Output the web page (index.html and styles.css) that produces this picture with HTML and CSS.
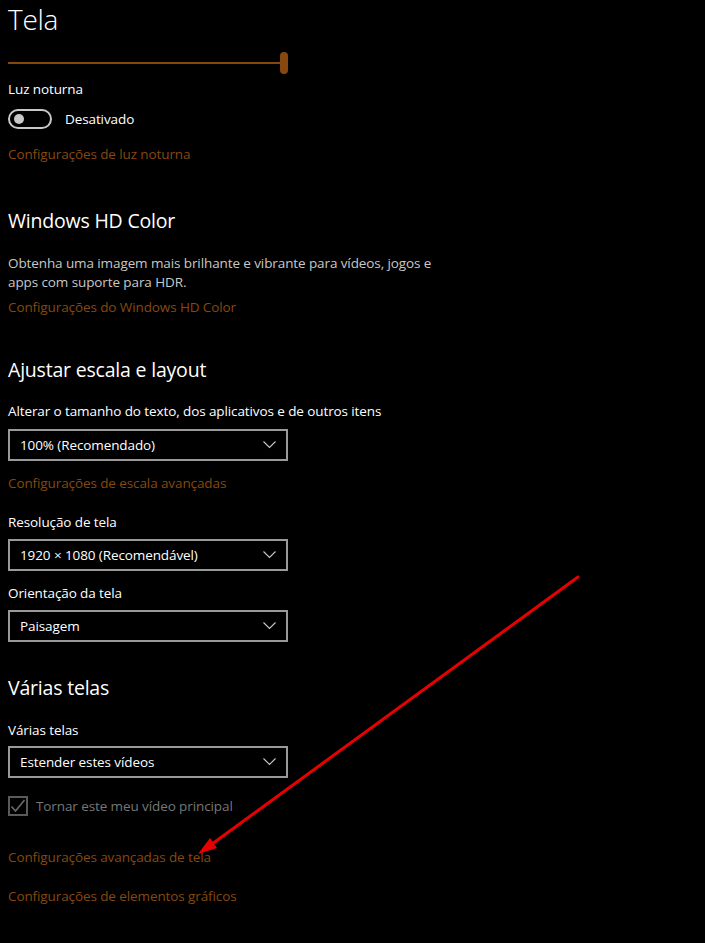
FILE: index.html
```html
<!DOCTYPE html>
<html lang="pt-BR">
<head>
  <meta charset="UTF-8">
  <meta name="viewport" content="width=device-width, initial-scale=1">
  <title>Tela</title>
  <link rel="stylesheet" href="styles.css">
</head>
<body>
  <div class="page">
    <h1 class="title">Tela</h1>

    <div class="slider"><div class="track"></div><div class="thumb"></div></div>

    <div class="label lbl-night">Luz noturna</div>
    <div class="toggle-row">
      <span class="toggle"><span class="knob"></span></span>
      <span class="toggle-text">Desativado</span>
    </div>
    <a class="link link-night" href="#">Configurações de luz noturna</a>

    <h2 class="heading h-hd">Windows HD Color</h2>
    <p class="desc">Obtenha uma imagem mais brilhante e vibrante para vídeos, jogos e apps com suporte para HDR.</p>
    <a class="link link-hd" href="#">Configurações do Windows HD Color</a>

    <h2 class="heading h-scale">Ajustar escala e layout</h2>
    <div class="label lbl-size">Alterar o tamanho do texto, dos aplicativos e de outros itens</div>
    <div class="select sel-a">
      <span>100% (Recomendado)</span>
      <svg class="chev" width="13" height="8" viewBox="0 0 13 8"><polyline points="0.5,0.5 6.5,6.5 12.5,0.5" fill="none" stroke="#c8c8c8" stroke-width="1.1"/></svg>
    </div>
    <a class="link link-scale" href="#">Configurações de escala avançadas</a>

    <div class="label lbl-res">Resolução de tela</div>
    <div class="select sel-b">
      <span>1920 × 1080 (Recomendável)</span>
      <svg class="chev" width="13" height="8" viewBox="0 0 13 8"><polyline points="0.5,0.5 6.5,6.5 12.5,0.5" fill="none" stroke="#c8c8c8" stroke-width="1.1"/></svg>
    </div>
    <div class="label lbl-orient">Orientação da tela</div>
    <div class="select sel-b">
      <span>Paisagem</span>
      <svg class="chev" width="13" height="8" viewBox="0 0 13 8"><polyline points="0.5,0.5 6.5,6.5 12.5,0.5" fill="none" stroke="#c8c8c8" stroke-width="1.1"/></svg>
    </div>

    <h2 class="heading h-multi">Várias telas</h2>
    <div class="label lbl-multi">Várias telas</div>
    <div class="select sel-c">
      <span>Estender estes vídeos</span>
      <svg class="chev" width="13" height="8" viewBox="0 0 13 8"><polyline points="0.5,0.5 6.5,6.5 12.5,0.5" fill="none" stroke="#c8c8c8" stroke-width="1.1"/></svg>
    </div>
    <div class="check-row">
      <span class="check">
        <svg width="16" height="16" viewBox="0 0 16 16"><polyline points="1.5,8.5 5.5,13 14.5,2" fill="none" stroke="#6a6a6a" stroke-width="1.6"/></svg>
      </span>
      <span class="check-text">Tornar este meu vídeo principal</span>
    </div>
    <a class="link link-adv" href="#">Configurações avançadas de tela</a>
    <a class="link link-gfx" href="#">Configurações de elementos gráficos</a>
  </div>

  <svg class="arrow" width="705" height="943" viewBox="0 0 705 943">
    <line x1="578" y1="577" x2="212" y2="844" stroke="#e60000" stroke-width="3" stroke-linecap="round"/>
    <polygon points="198,854 217,848 210,838" fill="#e60000"/>
  </svg>
</body>
</html>
```

FILE: styles.css
```css
body { margin: 0; background: #000; color: #fff; font-family: "Open Sans", "Noto Sans", sans-serif; font-size: 13.5px; letter-spacing: -0.1px; }
.page { padding: 0 8px; display: flex; flex-direction: column; align-items: flex-start; width: 440px; }

.title { margin: 0; font-size: 28px; font-weight: 300; line-height: 38px; height: 38px; letter-spacing: -0.3px; }
.heading { margin: 0; font-size: 19.5px; font-weight: 400; line-height: 28px; letter-spacing: -0.2px; }
.label { line-height: 20px; }
.link { display: block; color: #87480f; text-decoration: none; line-height: 20px; }
.desc { margin: 0; color: #c8c8c8; line-height: 19px; width: 430px; }

.slider { position: relative; width: 280px; height: 22px; margin-top: 14px; }
.track { position: absolute; left: 0; right: 4px; top: 10px; height: 2px; background: #87480f; }
.thumb { position: absolute; right: 0; top: 0; width: 8px; height: 22px; border-radius: 4px; background: #87480f; }

.lbl-night { margin-top: 5px; }
.toggle-row { display: flex; align-items: center; gap: 13px; margin-top: 9px; height: 21px; }
.toggle { height: 16px; width: 36px; border: 2px solid #c8c8c8; border-radius: 10px; display: flex; align-items: center; padding-left: 4px; box-sizing: content-box; }
.knob { width: 10px; height: 10px; border-radius: 50%; background: #c8c8c8; }
.toggle-text { margin-top: 1px; }
.link-night { margin-top: 15px; }

.h-hd { margin-top: 43px; }
.desc { margin-top: 19px; }
.link-hd { margin-top: 5px; }

.h-scale { margin-top: 39px; }
.lbl-size { margin-top: 17px; }
.select { box-sizing: border-box; width: 280px; height: 32px; border: 2px solid #999; display: flex; align-items: center; justify-content: space-between; padding: 0 10px 0 10px; }
.chev { display: block; }
.sel-a { margin-top: 8px; }
.link-scale { margin-top: 12px; }
.lbl-res { margin-top: 19px; }
.sel-b { margin-top: 7px; }
.lbl-orient { margin-top: 12px; }

.h-multi { margin-top: 32px; }
.lbl-multi { margin-top: 18px; }
.sel-c { margin-top: 6px; }
.check-row { display: flex; align-items: center; gap: 8px; margin-top: 18px; }
.check { box-sizing: border-box; width: 20px; height: 20px; border: 2px solid #5a5a5a; display: flex; align-items: center; justify-content: center; }
.check svg { display: block; }
.check-text { color: #777; }
.link-adv { margin-top: 31px; }
.link-gfx { margin-top: 19px; }

.arrow { position: absolute; left: 0; top: 0; pointer-events: none; }
```
